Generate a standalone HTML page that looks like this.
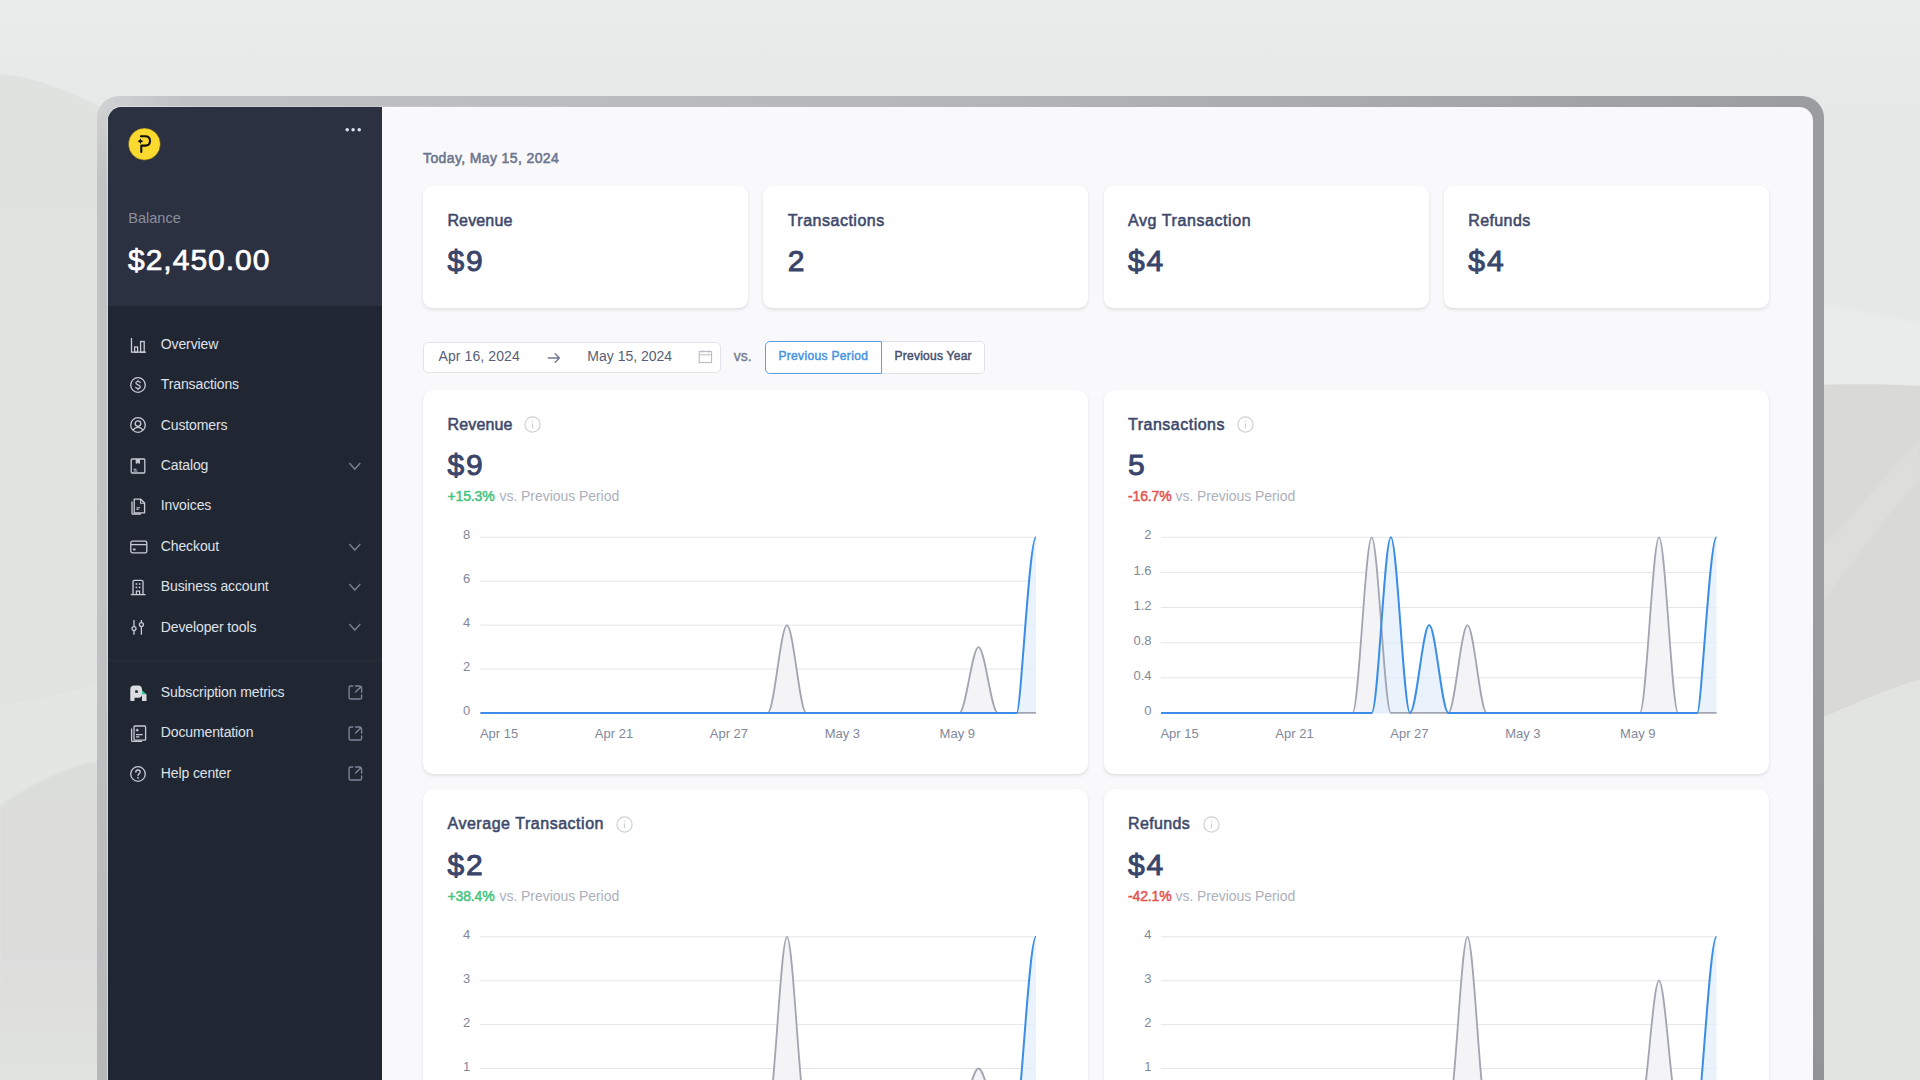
<!DOCTYPE html>
<html><head><meta charset="utf-8"><style>
html,body{margin:0;padding:0;width:1920px;height:1080px;overflow:hidden;background:#ebeceb;}
.t{position:absolute;white-space:nowrap;font-family:"Liberation Sans", sans-serif;}
</style></head><body>
<svg width="1920" height="1080" viewBox="0 0 1920 1080" style="position:absolute;left:0;top:0">
<defs><filter id="bl" x="-5%" y="-5%" width="110%" height="110%"><feGaussianBlur stdDeviation="1.5"/></filter><linearGradient id="tg" x1="0" y1="0" x2="0" y2="1"><stop offset="0" stop-color="#eaeceb"/><stop offset="1" stop-color="#e7e9e8"/></linearGradient></defs>
<rect width="1920" height="1080" fill="#e6e8e7"/>
<rect width="1920" height="110" fill="url(#tg)"/>
<path d="M0 74 C30 76 70 90 110 112 L110 1080 L0 1080 Z" fill="#e0e2e0"/>
<path d="M0 214 L110 214 L110 760 C70 763 30 785 0 806 Z" fill="#e1e3e1"/>
<path d="M0 705 C40 700 80 690 110 680 L110 760 C70 763 30 785 0 806 Z" fill="#e4e6e4"/>
<linearGradient id="lg2" x1="0" y1="0" x2="0" y2="1"><stop offset="0" stop-color="#dbdddb"/><stop offset="0.6" stop-color="#dcdddb"/><stop offset="1" stop-color="#e1e3e1"/></linearGradient><path d="M0 806 C30 785 70 763 110 760 L110 1080 L0 1080 Z" fill="url(#lg2)" filter="url(#bl)"/>
<path d="M1810 300 C1850 310 1890 318 1920 322 L1920 386 L1810 386 Z" fill="#eaeceb" filter="url(#bl)"/>
<path d="M1810 385 C1850 384 1890 384 1920 386 L1920 680 C1880 690 1840 712 1810 722 Z" fill="#d9dad7"/>
<path d="M1810 560 C1850 520 1890 470 1920 440 L1920 480 C1880 520 1840 580 1810 620 Z" fill="#dddedb" filter="url(#bl)"/>
<path d="M1810 722 C1840 712 1880 690 1920 680 L1920 1080 L1810 1080 Z" fill="#e2e4e2"/>
</svg><div style="position:absolute;left:97px;top:96px;width:1727px;height:1100px;border-radius:22px;background:radial-gradient(circle at 0 0,rgba(255,255,255,0.28),rgba(255,255,255,0) 90px),linear-gradient(180deg,rgba(0,0,0,0) 45%,rgba(0,0,0,0.06) 90%),linear-gradient(90deg,#c1c2c3 0%,#b7b8ba 45%,#9b9c9e 100%);"></div><div style="position:absolute;left:107px;top:106px;width:1707px;height:1100px;border-radius:15px;background:linear-gradient(90deg,rgba(230,238,238,0.55),rgba(255,255,255,0) 30%);"></div><div id="screen" style="position:absolute;left:108px;top:107px;width:1705px;height:1100px;border-radius:14px;overflow:hidden;background:#f9f9fb;"><div style="position:absolute;left:-108px;top:-107px;width:1920px;height:1200px;"><div style="position:absolute;left:108px;top:107px;width:274px;height:1000px;background:#212633;"></div><div style="position:absolute;left:108px;top:107px;width:274px;height:199px;background:#2c3142;"></div><div style="position:absolute;left:108px;top:658.5px;width:274px;height:3.5px;background:#262a35;"></div><svg style="position:absolute;left:128px;top:128px;overflow:visible;" width="33" height="33" viewBox="0 0 33 33"><circle cx="16.4" cy="16.1" r="16.1" fill="#fbd92f" stroke="#1b1d22" stroke-width="0.5"/>
<path d="M13.3 24 V17.6 H17.3 C20.3 17.6 22 15.8 22 12.95 C22 10.1 20.3 8.3 17.3 8.3 H12.9" fill="none" stroke="#111" stroke-width="2.1" stroke-linecap="round" stroke-linejoin="round"/>
<path d="M12.4 10.3 Q12.7 12.9 15.3 13.2 Q12.7 13.5 12.4 16.1 Q12.1 13.5 9.5 13.2 Q12.1 12.9 12.4 10.3 Z" fill="#111"/></svg><svg style="position:absolute;left:340px;top:125px;overflow:visible;" width="25" height="10" viewBox="0 0 25 10"><circle cx="7.2" cy="4.7" r="1.75" fill="#dde1ee"/><circle cx="13.1" cy="4.7" r="1.75" fill="#dde1ee"/><circle cx="19.2" cy="4.7" r="1.75" fill="#dde1ee"/></svg><div class="t" style="left:128.30px;top:210.73px;font-size:14.5px;line-height:14.5px;color:#8a8f9d;font-weight:400;">Balance</div><div class="t" style="left:128.00px;top:244.60px;font-size:30px;line-height:30px;color:#ffffff;font-weight:400;letter-spacing:1.0px;-webkit-text-stroke:0.7px #ffffff;">$2,450.00</div><svg style="position:absolute;left:130px;top:336.6px;overflow:visible;" width="18" height="18" viewBox="0 0 18 18"><path d="M1.5 1 V15.2 H16" fill="none" stroke="#c9ccd5" stroke-width="1.3"/><rect x="4.6" y="10" width="3" height="5.2" fill="none" stroke="#c9ccd5" stroke-width="1.3"/><rect x="10.6" y="4.5" width="3.6" height="10.7" fill="none" stroke="#c9ccd5" stroke-width="1.3"/></svg><div class="t" style="left:160.80px;top:336.75px;font-size:14px;line-height:14px;color:#dfe1e8;font-weight:400;letter-spacing:-0.12px;">Overview</div><svg style="position:absolute;left:130px;top:377.0px;overflow:visible;" width="18" height="18" viewBox="0 0 18 18"><circle cx="8" cy="8" r="7.3" fill="none" stroke="#c9ccd5" stroke-width="1.3"/><path d="M10.2 5.6 C9.8 4.8 9 4.5 8 4.5 C6.8 4.5 5.9 5.1 5.9 6.1 C5.9 8.3 10.3 7.4 10.3 9.8 C10.3 10.9 9.3 11.5 8 11.5 C6.9 11.5 6 11.1 5.7 10.3 M8 3.3 V4.5 M8 11.5 V12.7" fill="none" stroke="#c9ccd5" stroke-width="1.2" stroke-linecap="round"/></svg><div class="t" style="left:160.80px;top:377.15px;font-size:14px;line-height:14px;color:#dfe1e8;font-weight:400;letter-spacing:-0.12px;">Transactions</div><svg style="position:absolute;left:130px;top:417.40000000000003px;overflow:visible;" width="18" height="18" viewBox="0 0 18 18"><circle cx="8" cy="8" r="7.3" fill="none" stroke="#c9ccd5" stroke-width="1.3"/><circle cx="8" cy="6.6" r="2.8" fill="none" stroke="#c9ccd5" stroke-width="1.3"/><path d="M3.2 13.2 C4.3 11.2 6 10.4 8 10.4 C10 10.4 11.7 11.2 12.8 13.2" fill="none" stroke="#c9ccd5" stroke-width="1.3"/></svg><div class="t" style="left:160.80px;top:417.55px;font-size:14px;line-height:14px;color:#dfe1e8;font-weight:400;letter-spacing:-0.12px;">Customers</div><svg style="position:absolute;left:130px;top:457.8px;overflow:visible;" width="18" height="18" viewBox="0 0 18 18"><rect x="1.2" y="1" width="13.6" height="14" rx="1" fill="none" stroke="#c9ccd5" stroke-width="1.3"/><path d="M6.2 1 V5.4 L7.8 4.4 L9.4 5.4 V1" fill="#c9ccd5" stroke="#c9ccd5" stroke-width="1"/><path d="M3.6 11.2 H6.4 M3.6 13 H7.4" stroke="#c9ccd5" stroke-width="1.1"/></svg><div class="t" style="left:160.80px;top:457.95px;font-size:14px;line-height:14px;color:#dfe1e8;font-weight:400;letter-spacing:-0.12px;">Catalog</div><svg style="position:absolute;left:348px;top:461.8px;overflow:visible;" width="14" height="9" viewBox="0 0 14 9"><path d="M1.3 1.0 L6.8 7.1 L12.3 1.0" fill="none" stroke="#767c8d" stroke-width="1.5"/></svg><svg style="position:absolute;left:130px;top:498.20000000000005px;overflow:visible;" width="18" height="18" viewBox="0 0 18 18"><path d="M4.2 1.2 H10.8 L14.6 5 V14.8 H4.2 Z" fill="none" stroke="#c9ccd5" stroke-width="1.3" stroke-linejoin="round"/><path d="M2 3.4 V15.6 C2 15.9 2.2 16 2.5 16 H11" fill="none" stroke="#c9ccd5" stroke-width="1.3"/><path d="M10.6 1.4 V5.2 H14.4" fill="none" stroke="#c9ccd5" stroke-width="1.1"/><path d="M6.5 9.8 H10 M6.5 11.4 H8.5" stroke="#c9ccd5" stroke-width="1.1"/></svg><div class="t" style="left:160.80px;top:498.35px;font-size:14px;line-height:14px;color:#dfe1e8;font-weight:400;letter-spacing:-0.12px;">Invoices</div><svg style="position:absolute;left:130px;top:538.6px;overflow:visible;" width="18" height="18" viewBox="0 0 18 18"><rect x="0.8" y="2.2" width="16" height="11.6" rx="1.6" fill="none" stroke="#c9ccd5" stroke-width="1.3"/><path d="M0.8 5.6 H16.8" stroke="#c9ccd5" stroke-width="1.3"/><rect x="3" y="9.6" width="2.6" height="1.7" fill="#c9ccd5"/></svg><div class="t" style="left:160.80px;top:538.75px;font-size:14px;line-height:14px;color:#dfe1e8;font-weight:400;letter-spacing:-0.12px;">Checkout</div><svg style="position:absolute;left:348px;top:542.6px;overflow:visible;" width="14" height="9" viewBox="0 0 14 9"><path d="M1.3 1.0 L6.8 7.1 L12.3 1.0" fill="none" stroke="#767c8d" stroke-width="1.5"/></svg><svg style="position:absolute;left:130px;top:579.0px;overflow:visible;" width="18" height="18" viewBox="0 0 18 18"><path d="M3 15.5 V2.8 C3 2 3.6 1.4 4.4 1.4 H11.6 C12.4 1.4 13 2 13 2.8 V15.5" fill="none" stroke="#c9ccd5" stroke-width="1.3"/><path d="M0.8 15.6 H15.6" stroke="#c9ccd5" stroke-width="1.3"/><rect x="5.6" y="4.2" width="1.6" height="1.6" fill="#c9ccd5"/><rect x="8.8" y="4.2" width="1.6" height="1.6" fill="#c9ccd5"/><rect x="5.6" y="7.6" width="1.6" height="1.6" fill="#c9ccd5"/><rect x="8.8" y="7.6" width="1.6" height="1.6" fill="#c9ccd5"/><path d="M6.4 15.5 V12.2 H9.6 V15.5" fill="none" stroke="#c9ccd5" stroke-width="1.2"/></svg><div class="t" style="left:160.80px;top:579.15px;font-size:14px;line-height:14px;color:#dfe1e8;font-weight:400;letter-spacing:-0.12px;">Business account</div><svg style="position:absolute;left:348px;top:583.0px;overflow:visible;" width="14" height="9" viewBox="0 0 14 9"><path d="M1.3 1.0 L6.8 7.1 L12.3 1.0" fill="none" stroke="#767c8d" stroke-width="1.5"/></svg><svg style="position:absolute;left:130px;top:619.4000000000001px;overflow:visible;" width="18" height="18" viewBox="0 0 18 18"><path d="M4 1 V7.6 M4 11.6 V15.8 M11.4 1 V3.6 M11.4 7.6 V15.8" stroke="#c9ccd5" stroke-width="1.3"/><circle cx="4" cy="9.6" r="2" fill="none" stroke="#c9ccd5" stroke-width="1.3"/><circle cx="11.4" cy="5.6" r="2" fill="none" stroke="#c9ccd5" stroke-width="1.3"/></svg><div class="t" style="left:160.80px;top:619.55px;font-size:14px;line-height:14px;color:#dfe1e8;font-weight:400;letter-spacing:-0.12px;">Developer tools</div><svg style="position:absolute;left:348px;top:623.4000000000001px;overflow:visible;" width="14" height="9" viewBox="0 0 14 9"><path d="M1.3 1.0 L6.8 7.1 L12.3 1.0" fill="none" stroke="#767c8d" stroke-width="1.5"/></svg><svg style="position:absolute;left:130px;top:684.8px;overflow:visible;" width="18" height="18" viewBox="0 0 18 18"><path d="M0.3 4.2 C0.3 2 2 0.6 4 0.6 H8.4 C10.5 0.6 12 2.2 12 4.2 V9.6 C12 11.4 10.6 12.8 8.8 12.8 H4.5 V15 C4.5 15.6 4.1 16 3.5 16 H1.3 C0.7 16 0.3 15.6 0.3 15 Z" fill="#dcdde3"/><rect x="5.2" y="5.3" width="2.6" height="2.6" fill="#212633"/><path d="M12 5.2 L16.5 9.2 H12 Z" fill="#37c497"/><rect x="12" y="9.2" width="4.5" height="6.8" fill="#dcdde3"/></svg><div class="t" style="left:160.80px;top:684.95px;font-size:14px;line-height:14px;color:#dfe1e8;font-weight:400;letter-spacing:-0.12px;">Subscription metrics</div><svg style="position:absolute;left:347.5px;top:685.0px;overflow:visible;" width="15" height="15" viewBox="0 0 15 15"><path d="M4.7 1 H2.7 C1.8 1 1.1 1.7 1.1 2.6 V12.4 C1.1 13.3 1.8 14 2.7 14 H12 C12.9 14 13.6 13.3 13.6 12.4 V10 M13.6 7.2 V3.6 C13.6 2.1 12.6 1 11.1 1 H7.5 M7.6 7.1 L12.7 2" fill="none" stroke="#80869a" stroke-width="1.35" stroke-linecap="round"/></svg><svg style="position:absolute;left:130px;top:725.3px;overflow:visible;" width="18" height="18" viewBox="0 0 18 18"><rect x="4" y="1" width="11.6" height="14.2" rx="0.9" fill="none" stroke="#c9ccd5" stroke-width="1.3"/><path d="M1.6 3.6 V15.4 C1.6 16 2 16.4 2.6 16.4 H12" fill="none" stroke="#c9ccd5" stroke-width="1.3"/><path d="M7.2 3.8 V6.6 M5.8 5.2 H8.6 M6 9.6 H12.6 M6 11.8 H9.4" stroke="#c9ccd5" stroke-width="1.2"/></svg><div class="t" style="left:160.80px;top:725.45px;font-size:14px;line-height:14px;color:#dfe1e8;font-weight:400;letter-spacing:-0.12px;">Documentation</div><svg style="position:absolute;left:347.5px;top:725.5px;overflow:visible;" width="15" height="15" viewBox="0 0 15 15"><path d="M4.7 1 H2.7 C1.8 1 1.1 1.7 1.1 2.6 V12.4 C1.1 13.3 1.8 14 2.7 14 H12 C12.9 14 13.6 13.3 13.6 12.4 V10 M13.6 7.2 V3.6 C13.6 2.1 12.6 1 11.1 1 H7.5 M7.6 7.1 L12.7 2" fill="none" stroke="#80869a" stroke-width="1.35" stroke-linecap="round"/></svg><svg style="position:absolute;left:130px;top:765.8px;overflow:visible;" width="18" height="18" viewBox="0 0 18 18"><circle cx="8" cy="8" r="7.3" fill="none" stroke="#c9ccd5" stroke-width="1.3"/><path d="M5.8 6.2 C5.8 4.9 6.8 4 8 4 C9.3 4 10.2 4.9 10.2 6.1 C10.2 7.8 8 7.8 8 9.6" fill="none" stroke="#c9ccd5" stroke-width="1.3" stroke-linecap="round"/><circle cx="8" cy="11.8" r="0.9" fill="#c9ccd5"/></svg><div class="t" style="left:160.80px;top:765.95px;font-size:14px;line-height:14px;color:#dfe1e8;font-weight:400;letter-spacing:-0.12px;">Help center</div><svg style="position:absolute;left:347.5px;top:766.0px;overflow:visible;" width="15" height="15" viewBox="0 0 15 15"><path d="M4.7 1 H2.7 C1.8 1 1.1 1.7 1.1 2.6 V12.4 C1.1 13.3 1.8 14 2.7 14 H12 C12.9 14 13.6 13.3 13.6 12.4 V10 M13.6 7.2 V3.6 C13.6 2.1 12.6 1 11.1 1 H7.5 M7.6 7.1 L12.7 2" fill="none" stroke="#80869a" stroke-width="1.35" stroke-linecap="round"/></svg><div class="t" style="left:423.00px;top:150.85px;font-size:14px;line-height:14px;color:#6c7590;font-weight:400;letter-spacing:0.38px;-webkit-text-stroke:0.55px #6c7590;">Today, May 15, 2024</div><div style="position:absolute;left:423.0px;top:186px;width:325px;height:122px;background:#fff;border-radius:9px;box-shadow:0 2px 3.5px rgba(30,35,55,0.11),0 0 1px rgba(30,35,55,0.06);"></div><div class="t" style="left:447.40px;top:213.06px;font-size:16px;line-height:16px;color:#3e496b;font-weight:400;letter-spacing:0.15px;-webkit-text-stroke:0.55px #3e496b;">Revenue</div><div class="t" style="left:447.40px;top:246.00px;font-size:30px;line-height:30px;color:#39456a;font-weight:400;letter-spacing:1.9px;-webkit-text-stroke:0.95px #39456a;">$9</div><div style="position:absolute;left:763.3px;top:186px;width:325px;height:122px;background:#fff;border-radius:9px;box-shadow:0 2px 3.5px rgba(30,35,55,0.11),0 0 1px rgba(30,35,55,0.06);"></div><div class="t" style="left:787.70px;top:213.06px;font-size:16px;line-height:16px;color:#3e496b;font-weight:400;letter-spacing:0.5px;-webkit-text-stroke:0.55px #3e496b;">Transactions</div><div class="t" style="left:787.70px;top:246.00px;font-size:30px;line-height:30px;color:#39456a;font-weight:400;letter-spacing:1.9px;-webkit-text-stroke:0.95px #39456a;">2</div><div style="position:absolute;left:1103.6px;top:186px;width:325px;height:122px;background:#fff;border-radius:9px;box-shadow:0 2px 3.5px rgba(30,35,55,0.11),0 0 1px rgba(30,35,55,0.06);"></div><div class="t" style="left:1128.00px;top:213.06px;font-size:16px;line-height:16px;color:#3e496b;font-weight:400;letter-spacing:0.58px;-webkit-text-stroke:0.55px #3e496b;">Avg Transaction</div><div class="t" style="left:1128.00px;top:246.00px;font-size:30px;line-height:30px;color:#39456a;font-weight:400;letter-spacing:1.9px;-webkit-text-stroke:0.95px #39456a;">$4</div><div style="position:absolute;left:1443.9px;top:186px;width:325px;height:122px;background:#fff;border-radius:9px;box-shadow:0 2px 3.5px rgba(30,35,55,0.11),0 0 1px rgba(30,35,55,0.06);"></div><div class="t" style="left:1468.30px;top:213.06px;font-size:16px;line-height:16px;color:#3e496b;font-weight:400;letter-spacing:0.38px;-webkit-text-stroke:0.55px #3e496b;">Refunds</div><div class="t" style="left:1468.30px;top:246.00px;font-size:30px;line-height:30px;color:#39456a;font-weight:400;letter-spacing:1.9px;-webkit-text-stroke:0.95px #39456a;">$4</div><div style="position:absolute;left:423px;top:341.5px;width:298px;height:31px;background:#fff;border:1px solid #e2e4e9;border-radius:5px;box-sizing:border-box;"></div><div class="t" style="left:438.50px;top:349.45px;font-size:14px;line-height:14px;color:#586079;font-weight:400;letter-spacing:0.1px;">Apr 16, 2024</div><svg style="position:absolute;left:546px;top:351px;overflow:visible;" width="16" height="14" viewBox="0 0 16 14"><path d="M2.2 7 H13.4 M9.2 2.8 L13.4 7 L9.2 11.2" fill="none" stroke="#737a8f" stroke-width="1.4" stroke-linecap="round" stroke-linejoin="round"/></svg><div class="t" style="left:587.30px;top:349.45px;font-size:14px;line-height:14px;color:#586079;font-weight:400;">May 15, 2024</div><svg style="position:absolute;left:698px;top:349px;overflow:visible;" width="15" height="15" viewBox="0 0 15 15"><rect x="1.2" y="2.6" width="12.4" height="11" fill="none" stroke="#b3b7c2" stroke-width="1"/><path d="M1.2 5.8 H13.6 M4.4 1.2 V3.6 M10.4 1.2 V3.6" stroke="#b3b7c2" stroke-width="1"/></svg><div class="t" style="left:733.70px;top:349.45px;font-size:14px;line-height:14px;color:#737a8e;font-weight:400;-webkit-text-stroke:0.35px #737a8e;">vs.</div><div style="position:absolute;left:881px;top:341px;width:104px;height:33px;background:#fff;border:1px solid #dfe1e6;border-left:none;border-radius:0 5px 5px 0;box-sizing:border-box;"></div><div style="position:absolute;left:765px;top:341px;width:117px;height:33px;background:#fff;border:1.3px solid #5d9de2;border-radius:5px 0 0 5px;box-sizing:border-box;"></div><div class="t" style="left:778.40px;top:350.04px;font-size:12px;line-height:12px;color:#4a95e0;font-weight:400;letter-spacing:0.34px;-webkit-text-stroke:0.5px #4a95e0;">Previous Period</div><div class="t" style="left:894.50px;top:350.04px;font-size:12px;line-height:12px;color:#4a5270;font-weight:400;letter-spacing:0.25px;-webkit-text-stroke:0.5px #4a5270;">Previous Year</div><div style="position:absolute;left:423px;top:389.5px;width:665px;height:384px;background:#fff;border-radius:10px;box-shadow:0 2px 3.5px rgba(30,35,55,0.10),0 0 1px rgba(30,35,55,0.06);"></div><div class="t" style="left:447.50px;top:416.56px;font-size:16px;line-height:16px;color:#3e496b;font-weight:400;letter-spacing:0.15px;-webkit-text-stroke:0.55px #3e496b;">Revenue</div><svg style="position:absolute;left:524.0px;top:416.0px;overflow:visible;" width="17" height="17" viewBox="0 0 17 17"><circle cx="8.5" cy="8.5" r="7.6" fill="none" stroke="#cdd0d6" stroke-width="1.2"/><path d="M8.5 7.4 V12.4" stroke="#cdd0d6" stroke-width="1.2"/><circle cx="8.5" cy="5.2" r="0.8" fill="#cdd0d6"/></svg><div class="t" style="left:447.50px;top:450.11px;font-size:30px;line-height:30px;color:#39456a;font-weight:400;letter-spacing:1.9px;-webkit-text-stroke:0.95px #39456a;">$9</div><div class="t" style="left:447.50px;top:489.25px;font-size:14px;line-height:14px;color:#45c481;font-weight:400;letter-spacing:-0.15px;-webkit-text-stroke:0.5px #45c481;">+15.3%</div><div class="t" style="left:499.50px;top:489.25px;font-size:14px;line-height:14px;color:#acb0bc;font-weight:400;letter-spacing:-0.05px;">vs. Previous Period</div><svg style="position:absolute;left:0;top:0" width="1920" height="1200" viewBox="0 0 1920 1200"><path d="M480.5 537.30 H1036.0" stroke="#e4e5e9" stroke-width="1"/><path d="M480.5 581.20 H1036.0" stroke="#e4e5e9" stroke-width="1"/><path d="M480.5 625.10 H1036.0" stroke="#e4e5e9" stroke-width="1"/><path d="M480.5 669.00 H1036.0" stroke="#e4e5e9" stroke-width="1"/><path d="M480.5 712.90 H1036.0" stroke="#e4e5e9" stroke-width="1"/><path d="M480.50,712.90 C486.89,712.90 493.27,712.90 499.66,712.90 C506.04,712.90 512.43,712.90 518.81,712.90 C525.20,712.90 531.58,712.90 537.97,712.90 C544.35,712.90 550.74,712.90 557.12,712.90 C563.51,712.90 569.89,712.90 576.28,712.90 C582.66,712.90 589.05,712.90 595.43,712.90 C601.82,712.90 608.20,712.90 614.59,712.90 C620.97,712.90 627.36,712.90 633.74,712.90 C640.13,712.90 646.51,712.90 652.90,712.90 C659.28,712.90 665.67,712.90 672.05,712.90 C678.44,712.90 684.82,712.90 691.21,712.90 C697.59,712.90 703.98,712.90 710.36,712.90 C716.75,712.90 723.13,712.90 729.52,712.90 C735.90,712.90 742.29,712.90 748.67,712.90 C755.06,712.90 761.44,712.90 767.83,712.90 C774.21,712.90 780.60,625.10 786.98,625.10 C793.37,625.10 799.75,712.90 806.14,712.90 C812.52,712.90 818.91,712.90 825.29,712.90 C831.68,712.90 838.06,712.90 844.45,712.90 C850.83,712.90 857.22,712.90 863.60,712.90 C869.99,712.90 876.37,712.90 882.76,712.90 C889.14,712.90 895.53,712.90 901.91,712.90 C908.30,712.90 914.68,712.90 921.07,712.90 C927.45,712.90 933.84,712.90 940.22,712.90 C946.61,712.90 952.99,712.90 959.38,712.90 C965.76,712.90 972.15,647.05 978.53,647.05 C984.92,647.05 991.30,712.90 997.69,712.90 C1004.07,712.90 1010.46,712.90 1016.84,712.90 C1023.23,712.90 1029.61,712.90 1036.00,712.90 L1036.00,712.90 L480.50,712.90 Z" fill="#f3f3f6" opacity="0.9"/><path d="M480.50,712.90 C486.89,712.90 493.27,712.90 499.66,712.90 C506.04,712.90 512.43,712.90 518.81,712.90 C525.20,712.90 531.58,712.90 537.97,712.90 C544.35,712.90 550.74,712.90 557.12,712.90 C563.51,712.90 569.89,712.90 576.28,712.90 C582.66,712.90 589.05,712.90 595.43,712.90 C601.82,712.90 608.20,712.90 614.59,712.90 C620.97,712.90 627.36,712.90 633.74,712.90 C640.13,712.90 646.51,712.90 652.90,712.90 C659.28,712.90 665.67,712.90 672.05,712.90 C678.44,712.90 684.82,712.90 691.21,712.90 C697.59,712.90 703.98,712.90 710.36,712.90 C716.75,712.90 723.13,712.90 729.52,712.90 C735.90,712.90 742.29,712.90 748.67,712.90 C755.06,712.90 761.44,712.90 767.83,712.90 C774.21,712.90 780.60,712.90 786.98,712.90 C793.37,712.90 799.75,712.90 806.14,712.90 C812.52,712.90 818.91,712.90 825.29,712.90 C831.68,712.90 838.06,712.90 844.45,712.90 C850.83,712.90 857.22,712.90 863.60,712.90 C869.99,712.90 876.37,712.90 882.76,712.90 C889.14,712.90 895.53,712.90 901.91,712.90 C908.30,712.90 914.68,712.90 921.07,712.90 C927.45,712.90 933.84,712.90 940.22,712.90 C946.61,712.90 952.99,712.90 959.38,712.90 C965.76,712.90 972.15,712.90 978.53,712.90 C984.92,712.90 991.30,712.90 997.69,712.90 C1004.07,712.90 1010.46,712.90 1016.84,712.90 C1020.87,712.90 1029.10,537.30 1036.00,537.30 L1036.00,712.90 L480.50,712.90 Z" fill="#e3eefb" opacity="0.75"/><path d="M480.50,712.90 C486.89,712.90 493.27,712.90 499.66,712.90 C506.04,712.90 512.43,712.90 518.81,712.90 C525.20,712.90 531.58,712.90 537.97,712.90 C544.35,712.90 550.74,712.90 557.12,712.90 C563.51,712.90 569.89,712.90 576.28,712.90 C582.66,712.90 589.05,712.90 595.43,712.90 C601.82,712.90 608.20,712.90 614.59,712.90 C620.97,712.90 627.36,712.90 633.74,712.90 C640.13,712.90 646.51,712.90 652.90,712.90 C659.28,712.90 665.67,712.90 672.05,712.90 C678.44,712.90 684.82,712.90 691.21,712.90 C697.59,712.90 703.98,712.90 710.36,712.90 C716.75,712.90 723.13,712.90 729.52,712.90 C735.90,712.90 742.29,712.90 748.67,712.90 C755.06,712.90 761.44,712.90 767.83,712.90 C774.21,712.90 780.60,625.10 786.98,625.10 C793.37,625.10 799.75,712.90 806.14,712.90 C812.52,712.90 818.91,712.90 825.29,712.90 C831.68,712.90 838.06,712.90 844.45,712.90 C850.83,712.90 857.22,712.90 863.60,712.90 C869.99,712.90 876.37,712.90 882.76,712.90 C889.14,712.90 895.53,712.90 901.91,712.90 C908.30,712.90 914.68,712.90 921.07,712.90 C927.45,712.90 933.84,712.90 940.22,712.90 C946.61,712.90 952.99,712.90 959.38,712.90 C965.76,712.90 972.15,647.05 978.53,647.05 C984.92,647.05 991.30,712.90 997.69,712.90 C1004.07,712.90 1010.46,712.90 1016.84,712.90 C1023.23,712.90 1029.61,712.90 1036.00,712.90" fill="none" stroke="#a2a6b2" stroke-width="1.8"/><path d="M480.50,712.90 C486.89,712.90 493.27,712.90 499.66,712.90 C506.04,712.90 512.43,712.90 518.81,712.90 C525.20,712.90 531.58,712.90 537.97,712.90 C544.35,712.90 550.74,712.90 557.12,712.90 C563.51,712.90 569.89,712.90 576.28,712.90 C582.66,712.90 589.05,712.90 595.43,712.90 C601.82,712.90 608.20,712.90 614.59,712.90 C620.97,712.90 627.36,712.90 633.74,712.90 C640.13,712.90 646.51,712.90 652.90,712.90 C659.28,712.90 665.67,712.90 672.05,712.90 C678.44,712.90 684.82,712.90 691.21,712.90 C697.59,712.90 703.98,712.90 710.36,712.90 C716.75,712.90 723.13,712.90 729.52,712.90 C735.90,712.90 742.29,712.90 748.67,712.90 C755.06,712.90 761.44,712.90 767.83,712.90 C774.21,712.90 780.60,712.90 786.98,712.90 C793.37,712.90 799.75,712.90 806.14,712.90 C812.52,712.90 818.91,712.90 825.29,712.90 C831.68,712.90 838.06,712.90 844.45,712.90 C850.83,712.90 857.22,712.90 863.60,712.90 C869.99,712.90 876.37,712.90 882.76,712.90 C889.14,712.90 895.53,712.90 901.91,712.90 C908.30,712.90 914.68,712.90 921.07,712.90 C927.45,712.90 933.84,712.90 940.22,712.90 C946.61,712.90 952.99,712.90 959.38,712.90 C965.76,712.90 972.15,712.90 978.53,712.90 C984.92,712.90 991.30,712.90 997.69,712.90 C1004.07,712.90 1010.46,712.90 1016.84,712.90 C1020.87,712.90 1029.10,537.30 1036.00,537.30" fill="none" stroke="#3a8ee8" stroke-width="2"/></svg><div class="t" style="right:1449.80px;top:528.40px;font-size:13px;line-height:13px;color:#82889a;font-weight:400;">8</div><div class="t" style="right:1449.80px;top:572.30px;font-size:13px;line-height:13px;color:#82889a;font-weight:400;">6</div><div class="t" style="right:1449.80px;top:616.20px;font-size:13px;line-height:13px;color:#82889a;font-weight:400;">4</div><div class="t" style="right:1449.80px;top:660.10px;font-size:13px;line-height:13px;color:#82889a;font-weight:400;">2</div><div class="t" style="right:1449.80px;top:704.00px;font-size:13px;line-height:13px;color:#82889a;font-weight:400;">0</div><div class="t" style="left:479.90px;top:727.30px;font-size:13px;line-height:13px;color:#82889a;font-weight:400;">Apr 15</div><div class="t" style="left:594.83px;top:727.30px;font-size:13px;line-height:13px;color:#82889a;font-weight:400;">Apr 21</div><div class="t" style="left:709.76px;top:727.30px;font-size:13px;line-height:13px;color:#82889a;font-weight:400;">Apr 27</div><div class="t" style="left:824.69px;top:727.30px;font-size:13px;line-height:13px;color:#82889a;font-weight:400;">May 3</div><div class="t" style="left:939.62px;top:727.30px;font-size:13px;line-height:13px;color:#82889a;font-weight:400;">May 9</div><div style="position:absolute;left:1103.5px;top:389.5px;width:665px;height:384px;background:#fff;border-radius:10px;box-shadow:0 2px 3.5px rgba(30,35,55,0.10),0 0 1px rgba(30,35,55,0.06);"></div><div class="t" style="left:1128.00px;top:416.56px;font-size:16px;line-height:16px;color:#3e496b;font-weight:400;letter-spacing:0.5px;-webkit-text-stroke:0.55px #3e496b;">Transactions</div><svg style="position:absolute;left:1237.0px;top:416.0px;overflow:visible;" width="17" height="17" viewBox="0 0 17 17"><circle cx="8.5" cy="8.5" r="7.6" fill="none" stroke="#cdd0d6" stroke-width="1.2"/><path d="M8.5 7.4 V12.4" stroke="#cdd0d6" stroke-width="1.2"/><circle cx="8.5" cy="5.2" r="0.8" fill="#cdd0d6"/></svg><div class="t" style="left:1128.00px;top:450.11px;font-size:30px;line-height:30px;color:#39456a;font-weight:400;letter-spacing:1.9px;-webkit-text-stroke:0.95px #39456a;">5</div><div class="t" style="left:1128.00px;top:489.25px;font-size:14px;line-height:14px;color:#e2544f;font-weight:400;letter-spacing:-0.15px;-webkit-text-stroke:0.5px #e2544f;">-16.7%</div><div class="t" style="left:1175.50px;top:489.25px;font-size:14px;line-height:14px;color:#acb0bc;font-weight:400;letter-spacing:-0.05px;">vs. Previous Period</div><svg style="position:absolute;left:0;top:0" width="1920" height="1200" viewBox="0 0 1920 1200"><path d="M1161.0 537.30 H1716.5" stroke="#e4e5e9" stroke-width="1"/><path d="M1161.0 572.42 H1716.5" stroke="#e4e5e9" stroke-width="1"/><path d="M1161.0 607.54 H1716.5" stroke="#e4e5e9" stroke-width="1"/><path d="M1161.0 642.66 H1716.5" stroke="#e4e5e9" stroke-width="1"/><path d="M1161.0 677.78 H1716.5" stroke="#e4e5e9" stroke-width="1"/><path d="M1161.0 712.90 H1716.5" stroke="#e4e5e9" stroke-width="1"/><path d="M1161.00,712.90 C1167.39,712.90 1173.77,712.90 1180.16,712.90 C1186.54,712.90 1192.93,712.90 1199.31,712.90 C1205.70,712.90 1212.08,712.90 1218.47,712.90 C1224.85,712.90 1231.24,712.90 1237.62,712.90 C1244.01,712.90 1250.39,712.90 1256.78,712.90 C1263.16,712.90 1269.55,712.90 1275.93,712.90 C1282.32,712.90 1288.70,712.90 1295.09,712.90 C1301.47,712.90 1307.86,712.90 1314.24,712.90 C1320.63,712.90 1327.01,712.90 1333.40,712.90 C1339.78,712.90 1346.17,712.90 1352.55,712.90 C1358.94,712.90 1365.32,537.30 1371.71,537.30 C1378.09,537.30 1384.48,712.90 1390.86,712.90 C1397.25,712.90 1403.63,712.90 1410.02,712.90 C1416.40,712.90 1422.79,712.90 1429.17,712.90 C1435.56,712.90 1441.94,712.90 1448.33,712.90 C1454.71,712.90 1461.10,625.10 1467.48,625.10 C1473.87,625.10 1480.25,712.90 1486.64,712.90 C1493.02,712.90 1499.41,712.90 1505.79,712.90 C1512.18,712.90 1518.56,712.90 1524.95,712.90 C1531.33,712.90 1537.72,712.90 1544.10,712.90 C1550.49,712.90 1556.87,712.90 1563.26,712.90 C1569.64,712.90 1576.03,712.90 1582.41,712.90 C1588.80,712.90 1595.18,712.90 1601.57,712.90 C1607.95,712.90 1614.34,712.90 1620.72,712.90 C1627.11,712.90 1633.49,712.90 1639.88,712.90 C1646.26,712.90 1652.65,537.30 1659.03,537.30 C1665.42,537.30 1671.80,712.90 1678.19,712.90 C1684.57,712.90 1690.96,712.90 1697.34,712.90 C1703.73,712.90 1710.11,712.90 1716.50,712.90 L1716.50,712.90 L1161.00,712.90 Z" fill="#f3f3f6" opacity="0.9"/><path d="M1161.00,712.90 C1167.39,712.90 1173.77,712.90 1180.16,712.90 C1186.54,712.90 1192.93,712.90 1199.31,712.90 C1205.70,712.90 1212.08,712.90 1218.47,712.90 C1224.85,712.90 1231.24,712.90 1237.62,712.90 C1244.01,712.90 1250.39,712.90 1256.78,712.90 C1263.16,712.90 1269.55,712.90 1275.93,712.90 C1282.32,712.90 1288.70,712.90 1295.09,712.90 C1301.47,712.90 1307.86,712.90 1314.24,712.90 C1320.63,712.90 1327.01,712.90 1333.40,712.90 C1339.78,712.90 1346.17,712.90 1352.55,712.90 C1358.94,712.90 1365.32,712.90 1371.71,712.90 C1378.09,712.90 1384.48,537.30 1390.86,537.30 C1397.25,537.30 1403.63,712.90 1410.02,712.90 C1416.40,712.90 1422.79,625.10 1429.17,625.10 C1435.56,625.10 1441.94,712.90 1448.33,712.90 C1454.71,712.90 1461.10,712.90 1467.48,712.90 C1473.87,712.90 1480.25,712.90 1486.64,712.90 C1493.02,712.90 1499.41,712.90 1505.79,712.90 C1512.18,712.90 1518.56,712.90 1524.95,712.90 C1531.33,712.90 1537.72,712.90 1544.10,712.90 C1550.49,712.90 1556.87,712.90 1563.26,712.90 C1569.64,712.90 1576.03,712.90 1582.41,712.90 C1588.80,712.90 1595.18,712.90 1601.57,712.90 C1607.95,712.90 1614.34,712.90 1620.72,712.90 C1627.11,712.90 1633.49,712.90 1639.88,712.90 C1646.26,712.90 1652.65,712.90 1659.03,712.90 C1665.42,712.90 1671.80,712.90 1678.19,712.90 C1684.57,712.90 1690.96,712.90 1697.34,712.90 C1701.37,712.90 1709.60,537.30 1716.50,537.30 L1716.50,712.90 L1161.00,712.90 Z" fill="#e3eefb" opacity="0.75"/><path d="M1161.00,712.90 C1167.39,712.90 1173.77,712.90 1180.16,712.90 C1186.54,712.90 1192.93,712.90 1199.31,712.90 C1205.70,712.90 1212.08,712.90 1218.47,712.90 C1224.85,712.90 1231.24,712.90 1237.62,712.90 C1244.01,712.90 1250.39,712.90 1256.78,712.90 C1263.16,712.90 1269.55,712.90 1275.93,712.90 C1282.32,712.90 1288.70,712.90 1295.09,712.90 C1301.47,712.90 1307.86,712.90 1314.24,712.90 C1320.63,712.90 1327.01,712.90 1333.40,712.90 C1339.78,712.90 1346.17,712.90 1352.55,712.90 C1358.94,712.90 1365.32,537.30 1371.71,537.30 C1378.09,537.30 1384.48,712.90 1390.86,712.90 C1397.25,712.90 1403.63,712.90 1410.02,712.90 C1416.40,712.90 1422.79,712.90 1429.17,712.90 C1435.56,712.90 1441.94,712.90 1448.33,712.90 C1454.71,712.90 1461.10,625.10 1467.48,625.10 C1473.87,625.10 1480.25,712.90 1486.64,712.90 C1493.02,712.90 1499.41,712.90 1505.79,712.90 C1512.18,712.90 1518.56,712.90 1524.95,712.90 C1531.33,712.90 1537.72,712.90 1544.10,712.90 C1550.49,712.90 1556.87,712.90 1563.26,712.90 C1569.64,712.90 1576.03,712.90 1582.41,712.90 C1588.80,712.90 1595.18,712.90 1601.57,712.90 C1607.95,712.90 1614.34,712.90 1620.72,712.90 C1627.11,712.90 1633.49,712.90 1639.88,712.90 C1646.26,712.90 1652.65,537.30 1659.03,537.30 C1665.42,537.30 1671.80,712.90 1678.19,712.90 C1684.57,712.90 1690.96,712.90 1697.34,712.90 C1703.73,712.90 1710.11,712.90 1716.50,712.90" fill="none" stroke="#a2a6b2" stroke-width="1.8"/><path d="M1161.00,712.90 C1167.39,712.90 1173.77,712.90 1180.16,712.90 C1186.54,712.90 1192.93,712.90 1199.31,712.90 C1205.70,712.90 1212.08,712.90 1218.47,712.90 C1224.85,712.90 1231.24,712.90 1237.62,712.90 C1244.01,712.90 1250.39,712.90 1256.78,712.90 C1263.16,712.90 1269.55,712.90 1275.93,712.90 C1282.32,712.90 1288.70,712.90 1295.09,712.90 C1301.47,712.90 1307.86,712.90 1314.24,712.90 C1320.63,712.90 1327.01,712.90 1333.40,712.90 C1339.78,712.90 1346.17,712.90 1352.55,712.90 C1358.94,712.90 1365.32,712.90 1371.71,712.90 C1378.09,712.90 1384.48,537.30 1390.86,537.30 C1397.25,537.30 1403.63,712.90 1410.02,712.90 C1416.40,712.90 1422.79,625.10 1429.17,625.10 C1435.56,625.10 1441.94,712.90 1448.33,712.90 C1454.71,712.90 1461.10,712.90 1467.48,712.90 C1473.87,712.90 1480.25,712.90 1486.64,712.90 C1493.02,712.90 1499.41,712.90 1505.79,712.90 C1512.18,712.90 1518.56,712.90 1524.95,712.90 C1531.33,712.90 1537.72,712.90 1544.10,712.90 C1550.49,712.90 1556.87,712.90 1563.26,712.90 C1569.64,712.90 1576.03,712.90 1582.41,712.90 C1588.80,712.90 1595.18,712.90 1601.57,712.90 C1607.95,712.90 1614.34,712.90 1620.72,712.90 C1627.11,712.90 1633.49,712.90 1639.88,712.90 C1646.26,712.90 1652.65,712.90 1659.03,712.90 C1665.42,712.90 1671.80,712.90 1678.19,712.90 C1684.57,712.90 1690.96,712.90 1697.34,712.90 C1701.37,712.90 1709.60,537.30 1716.50,537.30" fill="none" stroke="#3a8ee8" stroke-width="2"/></svg><div class="t" style="right:768.50px;top:528.40px;font-size:13px;line-height:13px;color:#82889a;font-weight:400;">2</div><div class="t" style="right:768.50px;top:563.52px;font-size:13px;line-height:13px;color:#82889a;font-weight:400;">1.6</div><div class="t" style="right:768.50px;top:598.64px;font-size:13px;line-height:13px;color:#82889a;font-weight:400;">1.2</div><div class="t" style="right:768.50px;top:633.76px;font-size:13px;line-height:13px;color:#82889a;font-weight:400;">0.8</div><div class="t" style="right:768.50px;top:668.88px;font-size:13px;line-height:13px;color:#82889a;font-weight:400;">0.4</div><div class="t" style="right:768.50px;top:704.00px;font-size:13px;line-height:13px;color:#82889a;font-weight:400;">0</div><div class="t" style="left:1160.40px;top:727.30px;font-size:13px;line-height:13px;color:#82889a;font-weight:400;">Apr 15</div><div class="t" style="left:1275.33px;top:727.30px;font-size:13px;line-height:13px;color:#82889a;font-weight:400;">Apr 21</div><div class="t" style="left:1390.26px;top:727.30px;font-size:13px;line-height:13px;color:#82889a;font-weight:400;">Apr 27</div><div class="t" style="left:1505.19px;top:727.30px;font-size:13px;line-height:13px;color:#82889a;font-weight:400;">May 3</div><div class="t" style="left:1620.12px;top:727.30px;font-size:13px;line-height:13px;color:#82889a;font-weight:400;">May 9</div><div style="position:absolute;left:423px;top:789px;width:665px;height:384px;background:#fff;border-radius:10px;box-shadow:0 2px 3.5px rgba(30,35,55,0.10),0 0 1px rgba(30,35,55,0.06);"></div><div class="t" style="left:447.50px;top:816.06px;font-size:16px;line-height:16px;color:#3e496b;font-weight:400;letter-spacing:0.53px;-webkit-text-stroke:0.55px #3e496b;">Average Transaction</div><svg style="position:absolute;left:616.0px;top:815.5px;overflow:visible;" width="17" height="17" viewBox="0 0 17 17"><circle cx="8.5" cy="8.5" r="7.6" fill="none" stroke="#cdd0d6" stroke-width="1.2"/><path d="M8.5 7.4 V12.4" stroke="#cdd0d6" stroke-width="1.2"/><circle cx="8.5" cy="5.2" r="0.8" fill="#cdd0d6"/></svg><div class="t" style="left:447.50px;top:849.61px;font-size:30px;line-height:30px;color:#39456a;font-weight:400;letter-spacing:1.9px;-webkit-text-stroke:0.95px #39456a;">$2</div><div class="t" style="left:447.50px;top:888.75px;font-size:14px;line-height:14px;color:#45c481;font-weight:400;letter-spacing:-0.15px;-webkit-text-stroke:0.5px #45c481;">+38.4%</div><div class="t" style="left:499.50px;top:888.75px;font-size:14px;line-height:14px;color:#acb0bc;font-weight:400;letter-spacing:-0.05px;">vs. Previous Period</div><svg style="position:absolute;left:0;top:0" width="1920" height="1200" viewBox="0 0 1920 1200"><path d="M480.5 936.80 H1036.0" stroke="#e4e5e9" stroke-width="1"/><path d="M480.5 980.70 H1036.0" stroke="#e4e5e9" stroke-width="1"/><path d="M480.5 1024.60 H1036.0" stroke="#e4e5e9" stroke-width="1"/><path d="M480.5 1068.50 H1036.0" stroke="#e4e5e9" stroke-width="1"/><path d="M480.5 1112.40 H1036.0" stroke="#e4e5e9" stroke-width="1"/><path d="M480.50,1112.40 C486.89,1112.40 493.27,1112.40 499.66,1112.40 C506.04,1112.40 512.43,1112.40 518.81,1112.40 C525.20,1112.40 531.58,1112.40 537.97,1112.40 C544.35,1112.40 550.74,1112.40 557.12,1112.40 C563.51,1112.40 569.89,1112.40 576.28,1112.40 C582.66,1112.40 589.05,1112.40 595.43,1112.40 C601.82,1112.40 608.20,1112.40 614.59,1112.40 C620.97,1112.40 627.36,1112.40 633.74,1112.40 C640.13,1112.40 646.51,1112.40 652.90,1112.40 C659.28,1112.40 665.67,1112.40 672.05,1112.40 C678.44,1112.40 684.82,1112.40 691.21,1112.40 C697.59,1112.40 703.98,1112.40 710.36,1112.40 C716.75,1112.40 723.13,1112.40 729.52,1112.40 C735.90,1112.40 742.29,1112.40 748.67,1112.40 C755.06,1112.40 761.44,1112.40 767.83,1112.40 C774.21,1112.40 780.60,936.80 786.98,936.80 C793.37,936.80 799.75,1112.40 806.14,1112.40 C812.52,1112.40 818.91,1112.40 825.29,1112.40 C831.68,1112.40 838.06,1112.40 844.45,1112.40 C850.83,1112.40 857.22,1112.40 863.60,1112.40 C869.99,1112.40 876.37,1112.40 882.76,1112.40 C889.14,1112.40 895.53,1112.40 901.91,1112.40 C908.30,1112.40 914.68,1112.40 921.07,1112.40 C927.45,1112.40 933.84,1112.40 940.22,1112.40 C946.61,1112.40 952.99,1112.40 959.38,1112.40 C965.76,1112.40 972.15,1068.50 978.53,1068.50 C984.92,1068.50 991.30,1112.40 997.69,1112.40 C1004.07,1112.40 1010.46,1112.40 1016.84,1112.40 C1023.23,1112.40 1029.61,1112.40 1036.00,1112.40 L1036.00,1112.40 L480.50,1112.40 Z" fill="#f3f3f6" opacity="0.9"/><path d="M480.50,1112.40 C486.89,1112.40 493.27,1112.40 499.66,1112.40 C506.04,1112.40 512.43,1112.40 518.81,1112.40 C525.20,1112.40 531.58,1112.40 537.97,1112.40 C544.35,1112.40 550.74,1112.40 557.12,1112.40 C563.51,1112.40 569.89,1112.40 576.28,1112.40 C582.66,1112.40 589.05,1112.40 595.43,1112.40 C601.82,1112.40 608.20,1112.40 614.59,1112.40 C620.97,1112.40 627.36,1112.40 633.74,1112.40 C640.13,1112.40 646.51,1112.40 652.90,1112.40 C659.28,1112.40 665.67,1112.40 672.05,1112.40 C678.44,1112.40 684.82,1112.40 691.21,1112.40 C697.59,1112.40 703.98,1112.40 710.36,1112.40 C716.75,1112.40 723.13,1112.40 729.52,1112.40 C735.90,1112.40 742.29,1112.40 748.67,1112.40 C755.06,1112.40 761.44,1112.40 767.83,1112.40 C774.21,1112.40 780.60,1112.40 786.98,1112.40 C793.37,1112.40 799.75,1112.40 806.14,1112.40 C812.52,1112.40 818.91,1112.40 825.29,1112.40 C831.68,1112.40 838.06,1112.40 844.45,1112.40 C850.83,1112.40 857.22,1112.40 863.60,1112.40 C869.99,1112.40 876.37,1112.40 882.76,1112.40 C889.14,1112.40 895.53,1112.40 901.91,1112.40 C908.30,1112.40 914.68,1112.40 921.07,1112.40 C927.45,1112.40 933.84,1112.40 940.22,1112.40 C946.61,1112.40 952.99,1112.40 959.38,1112.40 C965.76,1112.40 972.15,1112.40 978.53,1112.40 C984.92,1112.40 991.30,1112.40 997.69,1112.40 C1004.07,1112.40 1010.46,1112.40 1016.84,1112.40 C1020.87,1112.40 1029.10,936.80 1036.00,936.80 L1036.00,1112.40 L480.50,1112.40 Z" fill="#e3eefb" opacity="0.75"/><path d="M480.50,1112.40 C486.89,1112.40 493.27,1112.40 499.66,1112.40 C506.04,1112.40 512.43,1112.40 518.81,1112.40 C525.20,1112.40 531.58,1112.40 537.97,1112.40 C544.35,1112.40 550.74,1112.40 557.12,1112.40 C563.51,1112.40 569.89,1112.40 576.28,1112.40 C582.66,1112.40 589.05,1112.40 595.43,1112.40 C601.82,1112.40 608.20,1112.40 614.59,1112.40 C620.97,1112.40 627.36,1112.40 633.74,1112.40 C640.13,1112.40 646.51,1112.40 652.90,1112.40 C659.28,1112.40 665.67,1112.40 672.05,1112.40 C678.44,1112.40 684.82,1112.40 691.21,1112.40 C697.59,1112.40 703.98,1112.40 710.36,1112.40 C716.75,1112.40 723.13,1112.40 729.52,1112.40 C735.90,1112.40 742.29,1112.40 748.67,1112.40 C755.06,1112.40 761.44,1112.40 767.83,1112.40 C774.21,1112.40 780.60,936.80 786.98,936.80 C793.37,936.80 799.75,1112.40 806.14,1112.40 C812.52,1112.40 818.91,1112.40 825.29,1112.40 C831.68,1112.40 838.06,1112.40 844.45,1112.40 C850.83,1112.40 857.22,1112.40 863.60,1112.40 C869.99,1112.40 876.37,1112.40 882.76,1112.40 C889.14,1112.40 895.53,1112.40 901.91,1112.40 C908.30,1112.40 914.68,1112.40 921.07,1112.40 C927.45,1112.40 933.84,1112.40 940.22,1112.40 C946.61,1112.40 952.99,1112.40 959.38,1112.40 C965.76,1112.40 972.15,1068.50 978.53,1068.50 C984.92,1068.50 991.30,1112.40 997.69,1112.40 C1004.07,1112.40 1010.46,1112.40 1016.84,1112.40 C1023.23,1112.40 1029.61,1112.40 1036.00,1112.40" fill="none" stroke="#a2a6b2" stroke-width="1.8"/><path d="M480.50,1112.40 C486.89,1112.40 493.27,1112.40 499.66,1112.40 C506.04,1112.40 512.43,1112.40 518.81,1112.40 C525.20,1112.40 531.58,1112.40 537.97,1112.40 C544.35,1112.40 550.74,1112.40 557.12,1112.40 C563.51,1112.40 569.89,1112.40 576.28,1112.40 C582.66,1112.40 589.05,1112.40 595.43,1112.40 C601.82,1112.40 608.20,1112.40 614.59,1112.40 C620.97,1112.40 627.36,1112.40 633.74,1112.40 C640.13,1112.40 646.51,1112.40 652.90,1112.40 C659.28,1112.40 665.67,1112.40 672.05,1112.40 C678.44,1112.40 684.82,1112.40 691.21,1112.40 C697.59,1112.40 703.98,1112.40 710.36,1112.40 C716.75,1112.40 723.13,1112.40 729.52,1112.40 C735.90,1112.40 742.29,1112.40 748.67,1112.40 C755.06,1112.40 761.44,1112.40 767.83,1112.40 C774.21,1112.40 780.60,1112.40 786.98,1112.40 C793.37,1112.40 799.75,1112.40 806.14,1112.40 C812.52,1112.40 818.91,1112.40 825.29,1112.40 C831.68,1112.40 838.06,1112.40 844.45,1112.40 C850.83,1112.40 857.22,1112.40 863.60,1112.40 C869.99,1112.40 876.37,1112.40 882.76,1112.40 C889.14,1112.40 895.53,1112.40 901.91,1112.40 C908.30,1112.40 914.68,1112.40 921.07,1112.40 C927.45,1112.40 933.84,1112.40 940.22,1112.40 C946.61,1112.40 952.99,1112.40 959.38,1112.40 C965.76,1112.40 972.15,1112.40 978.53,1112.40 C984.92,1112.40 991.30,1112.40 997.69,1112.40 C1004.07,1112.40 1010.46,1112.40 1016.84,1112.40 C1020.87,1112.40 1029.10,936.80 1036.00,936.80" fill="none" stroke="#3a8ee8" stroke-width="2"/></svg><div class="t" style="right:1449.80px;top:927.90px;font-size:13px;line-height:13px;color:#82889a;font-weight:400;">4</div><div class="t" style="right:1449.80px;top:971.80px;font-size:13px;line-height:13px;color:#82889a;font-weight:400;">3</div><div class="t" style="right:1449.80px;top:1015.70px;font-size:13px;line-height:13px;color:#82889a;font-weight:400;">2</div><div class="t" style="right:1449.80px;top:1059.60px;font-size:13px;line-height:13px;color:#82889a;font-weight:400;">1</div><div class="t" style="right:1449.80px;top:1103.50px;font-size:13px;line-height:13px;color:#82889a;font-weight:400;">0</div><div class="t" style="left:479.90px;top:1126.80px;font-size:13px;line-height:13px;color:#82889a;font-weight:400;">Apr 15</div><div class="t" style="left:594.83px;top:1126.80px;font-size:13px;line-height:13px;color:#82889a;font-weight:400;">Apr 21</div><div class="t" style="left:709.76px;top:1126.80px;font-size:13px;line-height:13px;color:#82889a;font-weight:400;">Apr 27</div><div class="t" style="left:824.69px;top:1126.80px;font-size:13px;line-height:13px;color:#82889a;font-weight:400;">May 3</div><div class="t" style="left:939.62px;top:1126.80px;font-size:13px;line-height:13px;color:#82889a;font-weight:400;">May 9</div><div style="position:absolute;left:1103.5px;top:789px;width:665px;height:384px;background:#fff;border-radius:10px;box-shadow:0 2px 3.5px rgba(30,35,55,0.10),0 0 1px rgba(30,35,55,0.06);"></div><div class="t" style="left:1128.00px;top:816.06px;font-size:16px;line-height:16px;color:#3e496b;font-weight:400;letter-spacing:0.38px;-webkit-text-stroke:0.55px #3e496b;">Refunds</div><svg style="position:absolute;left:1202.5px;top:815.5px;overflow:visible;" width="17" height="17" viewBox="0 0 17 17"><circle cx="8.5" cy="8.5" r="7.6" fill="none" stroke="#cdd0d6" stroke-width="1.2"/><path d="M8.5 7.4 V12.4" stroke="#cdd0d6" stroke-width="1.2"/><circle cx="8.5" cy="5.2" r="0.8" fill="#cdd0d6"/></svg><div class="t" style="left:1128.00px;top:849.61px;font-size:30px;line-height:30px;color:#39456a;font-weight:400;letter-spacing:1.9px;-webkit-text-stroke:0.95px #39456a;">$4</div><div class="t" style="left:1128.00px;top:888.75px;font-size:14px;line-height:14px;color:#e2544f;font-weight:400;letter-spacing:-0.15px;-webkit-text-stroke:0.5px #e2544f;">-42.1%</div><div class="t" style="left:1175.50px;top:888.75px;font-size:14px;line-height:14px;color:#acb0bc;font-weight:400;letter-spacing:-0.05px;">vs. Previous Period</div><svg style="position:absolute;left:0;top:0" width="1920" height="1200" viewBox="0 0 1920 1200"><path d="M1161.0 936.80 H1716.5" stroke="#e4e5e9" stroke-width="1"/><path d="M1161.0 980.70 H1716.5" stroke="#e4e5e9" stroke-width="1"/><path d="M1161.0 1024.60 H1716.5" stroke="#e4e5e9" stroke-width="1"/><path d="M1161.0 1068.50 H1716.5" stroke="#e4e5e9" stroke-width="1"/><path d="M1161.0 1112.40 H1716.5" stroke="#e4e5e9" stroke-width="1"/><path d="M1161.00,1112.40 C1167.39,1112.40 1173.77,1112.40 1180.16,1112.40 C1186.54,1112.40 1192.93,1112.40 1199.31,1112.40 C1205.70,1112.40 1212.08,1112.40 1218.47,1112.40 C1224.85,1112.40 1231.24,1112.40 1237.62,1112.40 C1244.01,1112.40 1250.39,1112.40 1256.78,1112.40 C1263.16,1112.40 1269.55,1112.40 1275.93,1112.40 C1282.32,1112.40 1288.70,1112.40 1295.09,1112.40 C1301.47,1112.40 1307.86,1112.40 1314.24,1112.40 C1320.63,1112.40 1327.01,1112.40 1333.40,1112.40 C1339.78,1112.40 1346.17,1112.40 1352.55,1112.40 C1358.94,1112.40 1365.32,1112.40 1371.71,1112.40 C1378.09,1112.40 1384.48,1112.40 1390.86,1112.40 C1397.25,1112.40 1403.63,1112.40 1410.02,1112.40 C1416.40,1112.40 1422.79,1112.40 1429.17,1112.40 C1435.56,1112.40 1441.94,1112.40 1448.33,1112.40 C1454.71,1112.40 1461.10,936.80 1467.48,936.80 C1473.87,936.80 1480.25,1112.40 1486.64,1112.40 C1493.02,1112.40 1499.41,1112.40 1505.79,1112.40 C1512.18,1112.40 1518.56,1112.40 1524.95,1112.40 C1531.33,1112.40 1537.72,1112.40 1544.10,1112.40 C1550.49,1112.40 1556.87,1112.40 1563.26,1112.40 C1569.64,1112.40 1576.03,1112.40 1582.41,1112.40 C1588.80,1112.40 1595.18,1112.40 1601.57,1112.40 C1607.95,1112.40 1614.34,1112.40 1620.72,1112.40 C1627.11,1112.40 1633.49,1112.40 1639.88,1112.40 C1646.26,1112.40 1652.65,980.70 1659.03,980.70 C1665.42,980.70 1671.80,1112.40 1678.19,1112.40 C1684.57,1112.40 1690.96,1112.40 1697.34,1112.40 C1703.73,1112.40 1710.11,1112.40 1716.50,1112.40 L1716.50,1112.40 L1161.00,1112.40 Z" fill="#f3f3f6" opacity="0.9"/><path d="M1161.00,1112.40 C1167.39,1112.40 1173.77,1112.40 1180.16,1112.40 C1186.54,1112.40 1192.93,1112.40 1199.31,1112.40 C1205.70,1112.40 1212.08,1112.40 1218.47,1112.40 C1224.85,1112.40 1231.24,1112.40 1237.62,1112.40 C1244.01,1112.40 1250.39,1112.40 1256.78,1112.40 C1263.16,1112.40 1269.55,1112.40 1275.93,1112.40 C1282.32,1112.40 1288.70,1112.40 1295.09,1112.40 C1301.47,1112.40 1307.86,1112.40 1314.24,1112.40 C1320.63,1112.40 1327.01,1112.40 1333.40,1112.40 C1339.78,1112.40 1346.17,1112.40 1352.55,1112.40 C1358.94,1112.40 1365.32,1112.40 1371.71,1112.40 C1378.09,1112.40 1384.48,1112.40 1390.86,1112.40 C1397.25,1112.40 1403.63,1112.40 1410.02,1112.40 C1416.40,1112.40 1422.79,1112.40 1429.17,1112.40 C1435.56,1112.40 1441.94,1112.40 1448.33,1112.40 C1454.71,1112.40 1461.10,1112.40 1467.48,1112.40 C1473.87,1112.40 1480.25,1112.40 1486.64,1112.40 C1493.02,1112.40 1499.41,1112.40 1505.79,1112.40 C1512.18,1112.40 1518.56,1112.40 1524.95,1112.40 C1531.33,1112.40 1537.72,1112.40 1544.10,1112.40 C1550.49,1112.40 1556.87,1112.40 1563.26,1112.40 C1569.64,1112.40 1576.03,1112.40 1582.41,1112.40 C1588.80,1112.40 1595.18,1112.40 1601.57,1112.40 C1607.95,1112.40 1614.34,1112.40 1620.72,1112.40 C1627.11,1112.40 1633.49,1112.40 1639.88,1112.40 C1646.26,1112.40 1652.65,1112.40 1659.03,1112.40 C1665.42,1112.40 1671.80,1112.40 1678.19,1112.40 C1684.57,1112.40 1690.96,1112.40 1697.34,1112.40 C1701.37,1112.40 1709.60,936.80 1716.50,936.80 L1716.50,1112.40 L1161.00,1112.40 Z" fill="#e3eefb" opacity="0.75"/><path d="M1161.00,1112.40 C1167.39,1112.40 1173.77,1112.40 1180.16,1112.40 C1186.54,1112.40 1192.93,1112.40 1199.31,1112.40 C1205.70,1112.40 1212.08,1112.40 1218.47,1112.40 C1224.85,1112.40 1231.24,1112.40 1237.62,1112.40 C1244.01,1112.40 1250.39,1112.40 1256.78,1112.40 C1263.16,1112.40 1269.55,1112.40 1275.93,1112.40 C1282.32,1112.40 1288.70,1112.40 1295.09,1112.40 C1301.47,1112.40 1307.86,1112.40 1314.24,1112.40 C1320.63,1112.40 1327.01,1112.40 1333.40,1112.40 C1339.78,1112.40 1346.17,1112.40 1352.55,1112.40 C1358.94,1112.40 1365.32,1112.40 1371.71,1112.40 C1378.09,1112.40 1384.48,1112.40 1390.86,1112.40 C1397.25,1112.40 1403.63,1112.40 1410.02,1112.40 C1416.40,1112.40 1422.79,1112.40 1429.17,1112.40 C1435.56,1112.40 1441.94,1112.40 1448.33,1112.40 C1454.71,1112.40 1461.10,936.80 1467.48,936.80 C1473.87,936.80 1480.25,1112.40 1486.64,1112.40 C1493.02,1112.40 1499.41,1112.40 1505.79,1112.40 C1512.18,1112.40 1518.56,1112.40 1524.95,1112.40 C1531.33,1112.40 1537.72,1112.40 1544.10,1112.40 C1550.49,1112.40 1556.87,1112.40 1563.26,1112.40 C1569.64,1112.40 1576.03,1112.40 1582.41,1112.40 C1588.80,1112.40 1595.18,1112.40 1601.57,1112.40 C1607.95,1112.40 1614.34,1112.40 1620.72,1112.40 C1627.11,1112.40 1633.49,1112.40 1639.88,1112.40 C1646.26,1112.40 1652.65,980.70 1659.03,980.70 C1665.42,980.70 1671.80,1112.40 1678.19,1112.40 C1684.57,1112.40 1690.96,1112.40 1697.34,1112.40 C1703.73,1112.40 1710.11,1112.40 1716.50,1112.40" fill="none" stroke="#a2a6b2" stroke-width="1.8"/><path d="M1161.00,1112.40 C1167.39,1112.40 1173.77,1112.40 1180.16,1112.40 C1186.54,1112.40 1192.93,1112.40 1199.31,1112.40 C1205.70,1112.40 1212.08,1112.40 1218.47,1112.40 C1224.85,1112.40 1231.24,1112.40 1237.62,1112.40 C1244.01,1112.40 1250.39,1112.40 1256.78,1112.40 C1263.16,1112.40 1269.55,1112.40 1275.93,1112.40 C1282.32,1112.40 1288.70,1112.40 1295.09,1112.40 C1301.47,1112.40 1307.86,1112.40 1314.24,1112.40 C1320.63,1112.40 1327.01,1112.40 1333.40,1112.40 C1339.78,1112.40 1346.17,1112.40 1352.55,1112.40 C1358.94,1112.40 1365.32,1112.40 1371.71,1112.40 C1378.09,1112.40 1384.48,1112.40 1390.86,1112.40 C1397.25,1112.40 1403.63,1112.40 1410.02,1112.40 C1416.40,1112.40 1422.79,1112.40 1429.17,1112.40 C1435.56,1112.40 1441.94,1112.40 1448.33,1112.40 C1454.71,1112.40 1461.10,1112.40 1467.48,1112.40 C1473.87,1112.40 1480.25,1112.40 1486.64,1112.40 C1493.02,1112.40 1499.41,1112.40 1505.79,1112.40 C1512.18,1112.40 1518.56,1112.40 1524.95,1112.40 C1531.33,1112.40 1537.72,1112.40 1544.10,1112.40 C1550.49,1112.40 1556.87,1112.40 1563.26,1112.40 C1569.64,1112.40 1576.03,1112.40 1582.41,1112.40 C1588.80,1112.40 1595.18,1112.40 1601.57,1112.40 C1607.95,1112.40 1614.34,1112.40 1620.72,1112.40 C1627.11,1112.40 1633.49,1112.40 1639.88,1112.40 C1646.26,1112.40 1652.65,1112.40 1659.03,1112.40 C1665.42,1112.40 1671.80,1112.40 1678.19,1112.40 C1684.57,1112.40 1690.96,1112.40 1697.34,1112.40 C1701.37,1112.40 1709.60,936.80 1716.50,936.80" fill="none" stroke="#3a8ee8" stroke-width="2"/></svg><div class="t" style="right:768.50px;top:927.90px;font-size:13px;line-height:13px;color:#82889a;font-weight:400;">4</div><div class="t" style="right:768.50px;top:971.80px;font-size:13px;line-height:13px;color:#82889a;font-weight:400;">3</div><div class="t" style="right:768.50px;top:1015.70px;font-size:13px;line-height:13px;color:#82889a;font-weight:400;">2</div><div class="t" style="right:768.50px;top:1059.60px;font-size:13px;line-height:13px;color:#82889a;font-weight:400;">1</div><div class="t" style="right:768.50px;top:1103.50px;font-size:13px;line-height:13px;color:#82889a;font-weight:400;">0</div><div class="t" style="left:1160.40px;top:1126.80px;font-size:13px;line-height:13px;color:#82889a;font-weight:400;">Apr 15</div><div class="t" style="left:1275.33px;top:1126.80px;font-size:13px;line-height:13px;color:#82889a;font-weight:400;">Apr 21</div><div class="t" style="left:1390.26px;top:1126.80px;font-size:13px;line-height:13px;color:#82889a;font-weight:400;">Apr 27</div><div class="t" style="left:1505.19px;top:1126.80px;font-size:13px;line-height:13px;color:#82889a;font-weight:400;">May 3</div><div class="t" style="left:1620.12px;top:1126.80px;font-size:13px;line-height:13px;color:#82889a;font-weight:400;">May 9</div></div></div>
</body></html>
